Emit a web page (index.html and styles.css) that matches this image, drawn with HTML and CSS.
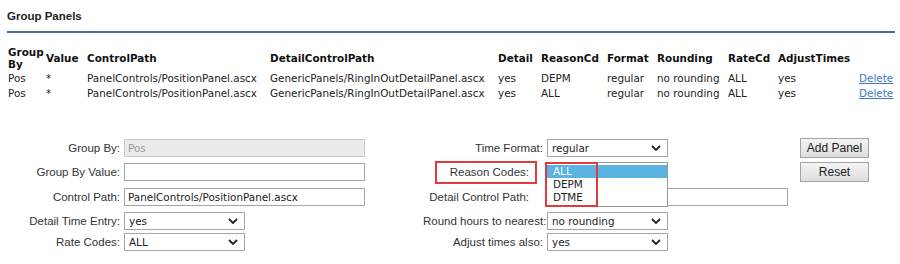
FILE: index.html
```html
<!DOCTYPE html>
<html lang="en">
<head>
  <meta charset="UTF-8" />
  <title>Group Panels</title>
  <link rel="stylesheet" href="styles.css">
</head>
<body>
  <div class="page">
    <h2 class="title">Group Panels</h2>

    <table class="panels">
      <colgroup>
        <col style="width:38px"><col style="width:41px"><col style="width:183px"><col style="width:228px">
        <col style="width:43px"><col style="width:66px"><col style="width:50px"><col style="width:71px">
        <col style="width:50px"><col style="width:81px"><col style="width:36px">
      </colgroup>
      <thead>
        <tr>
          <th>Group By</th>
          <th>Value</th>
          <th>ControlPath</th>
          <th>DetailControlPath</th>
          <th>Detail</th>
          <th>ReasonCd</th>
          <th>Format</th>
          <th>Rounding</th>
          <th>RateCd</th>
          <th>AdjustTimes</th>
          <th></th>
        </tr>
      </thead>
      <tbody>
        <tr>
          <td>Pos</td><td>*</td><td>PanelControls/PositionPanel.ascx</td><td>GenericPanels/RingInOutDetailPanel.ascx</td>
          <td>yes</td><td>DEPM</td><td>regular</td><td>no rounding</td><td>ALL</td><td>yes</td>
          <td><a href="#">Delete</a></td>
        </tr>
        <tr>
          <td>Pos</td><td>*</td><td>PanelControls/PositionPanel.ascx</td><td>GenericPanels/RingInOutDetailPanel.ascx</td>
          <td>yes</td><td>ALL</td><td>regular</td><td>no rounding</td><td>ALL</td><td>yes</td>
          <td><a href="#">Delete</a></td>
        </tr>
      </tbody>
    </table>

    <div class="editor">
      <div class="fields">
        <label class="lbl">Group By:</label>
        <div class="input disabled">Pos</div>

        <label class="lbl">Group By Value:</label>
        <div class="input"></div>

        <label class="lbl">Control Path:</label>
        <div class="input">PanelControls/PositionPanel.ascx</div>

        <label class="lbl">Detail Time Entry:</label>
        <div class="select"><span>yes</span>
          <svg width="10" height="6" viewBox="0 0 10 6"><path d="M1 1 L5 5 L9 1" fill="none" stroke="#222" stroke-width="1.8"/></svg>
        </div>

        <label class="lbl">Rate Codes:</label>
        <div class="select"><span>ALL</span>
          <svg width="10" height="6" viewBox="0 0 10 6"><path d="M1 1 L5 5 L9 1" fill="none" stroke="#222" stroke-width="1.8"/></svg>
        </div>
      </div>

      <div class="fields right">
        <label class="lbl">Time Format:</label>
        <div class="select"><span>regular</span>
          <svg width="10" height="6" viewBox="0 0 10 6"><path d="M1 1 L5 5 L9 1" fill="none" stroke="#222" stroke-width="1.8"/></svg>
        </div>

        <label class="lbl boxed"><span class="marked">Reason Codes:</span></label>
        <div class="dropdown-cell">
          <ul class="listbox">
            <li class="selected">ALL</li>
            <li>DEPM</li>
            <li>DTME</li>
          </ul>
          <div class="mark-box"></div>
        </div>

        <label class="lbl inset">Detail Control Path:</label>
        <div class="input wide"></div>

        <label class="lbl">Round hours to nearest:</label>
        <div class="select"><span>no rounding</span>
          <svg width="10" height="6" viewBox="0 0 10 6"><path d="M1 1 L5 5 L9 1" fill="none" stroke="#222" stroke-width="1.8"/></svg>
        </div>

        <label class="lbl">Adjust times also:</label>
        <div class="select"><span>yes</span>
          <svg width="10" height="6" viewBox="0 0 10 6"><path d="M1 1 L5 5 L9 1" fill="none" stroke="#222" stroke-width="1.8"/></svg>
        </div>
      </div>

      <div class="buttons">
        <button type="button">Add Panel</button>
        <button type="button">Reset</button>
      </div>
    </div>
  </div>
</body>
</html>
```
FILE: styles.css
```css
body {
  margin: 0;
  background: #fff;
  font-family: "Liberation Sans", Arial, sans-serif;
  color: #222;
}
.page {
  padding: 9px 5px 0 7px;
}
.title {
  margin: 0;
  font-size: 11.5px;
  line-height: 14px;
  font-weight: bold;
  color: #222;
  padding-bottom: 8px;
  border-bottom: 2px solid #4b6f97;
}
.panels {
  margin: 12px 0 0 1px;
  border-collapse: collapse;
  table-layout: fixed;
  font-family: "DejaVu Sans", Verdana, sans-serif;
  font-size: 10.4px;
  color: #222;
}
.panels th, .panels td {
  padding: 0;
  text-align: left;
  white-space: nowrap;
}
.panels th {
  font-weight: bold;
  line-height: 12px;
  height: 26px;
  white-space: normal;
  color: #111;
}
.panels td {
  line-height: 15px;
  height: 15px;
}
.panels a {
  color: #3d78c0;
}
.editor {
  display: flex;
  align-items: flex-start;
  margin-top: 38px;
}
.fields {
  display: grid;
  grid-template-columns: 113px 241px;
  grid-template-rows: 24px 25px 24px 21px 21px;
  column-gap: 4px;
  align-items: start;
}
.fields.right {
  grid-template-columns: 120px 241px;
  margin-left: 58px;
}
.lbl {
  font-size: 11.5px;
  line-height: 18px;
  text-align: right;
  color: #333;
  white-space: nowrap;
}
.lbl.boxed {
  padding-right: 6px;
}
.lbl.inset {
  padding-right: 14px;
}
.marked {
  display: inline-block;
  box-sizing: border-box;
  height: 23px;
  margin-top: -3px;
  line-height: 19px;
  padding: 0 6px 0 13px;
  border: 2px solid #e0393e;
}
.input {
  box-sizing: border-box;
  height: 18px;
  border: 1px solid #a6a6a6;
  background: #fff;
  padding: 0 3px;
  font-family: "DejaVu Sans", Verdana, sans-serif;
  font-size: 10.4px;
  line-height: 16px;
  color: #222;
}
.input.disabled {
  background: #ebebeb;
  border-color: #c8c8c8;
  color: #999;
}
.select {
  box-sizing: border-box;
  width: 121px;
  height: 18px;
  border: 1px solid #a6a6a6;
  background: #fff;
  display: flex;
  align-items: center;
  justify-content: space-between;
  padding: 0 6px 0 4px;
  font-family: "DejaVu Sans", Verdana, sans-serif;
  font-size: 10.4px;
  color: #222;
}
.dropdown-cell {
  position: relative;
  height: 18px;
}
.listbox {
  position: absolute;
  top: -1px;
  left: -1px;
  z-index: 2;
  box-sizing: border-box;
  width: 122px;
  height: 45px;
  margin: 0;
  padding: 2px 0 0 0;
  list-style: none;
  border: 1px solid #999;
  background: #fff;
  font-family: "DejaVu Sans", Verdana, sans-serif;
  font-size: 10.4px;
  color: #222;
}
.listbox li {
  height: 13px;
  line-height: 13px;
  padding-left: 6px;
}
.listbox li.selected {
  background: #5ab3e3;
  color: #fff;
}
.mark-box {
  position: absolute;
  top: -1px;
  left: -2px;
  z-index: 3;
  box-sizing: border-box;
  width: 53px;
  height: 45px;
  border: 2px solid #e0393e;
}
.input.wide {
  width: 241px;
}
.buttons {
  display: flex;
  flex-direction: column;
  gap: 4px;
  margin-left: 12px;
  margin-top: -1px;
}
.buttons button {
  box-sizing: border-box;
  width: 69px;
  height: 20px;
  padding: 0;
  border: 1px solid #a3a3a3;
  border-radius: 0;
  background: linear-gradient(#f4f4f4, #dedede);
  font-family: "Liberation Sans", Arial, sans-serif;
  font-size: 12px;
  color: #222;
}
```
